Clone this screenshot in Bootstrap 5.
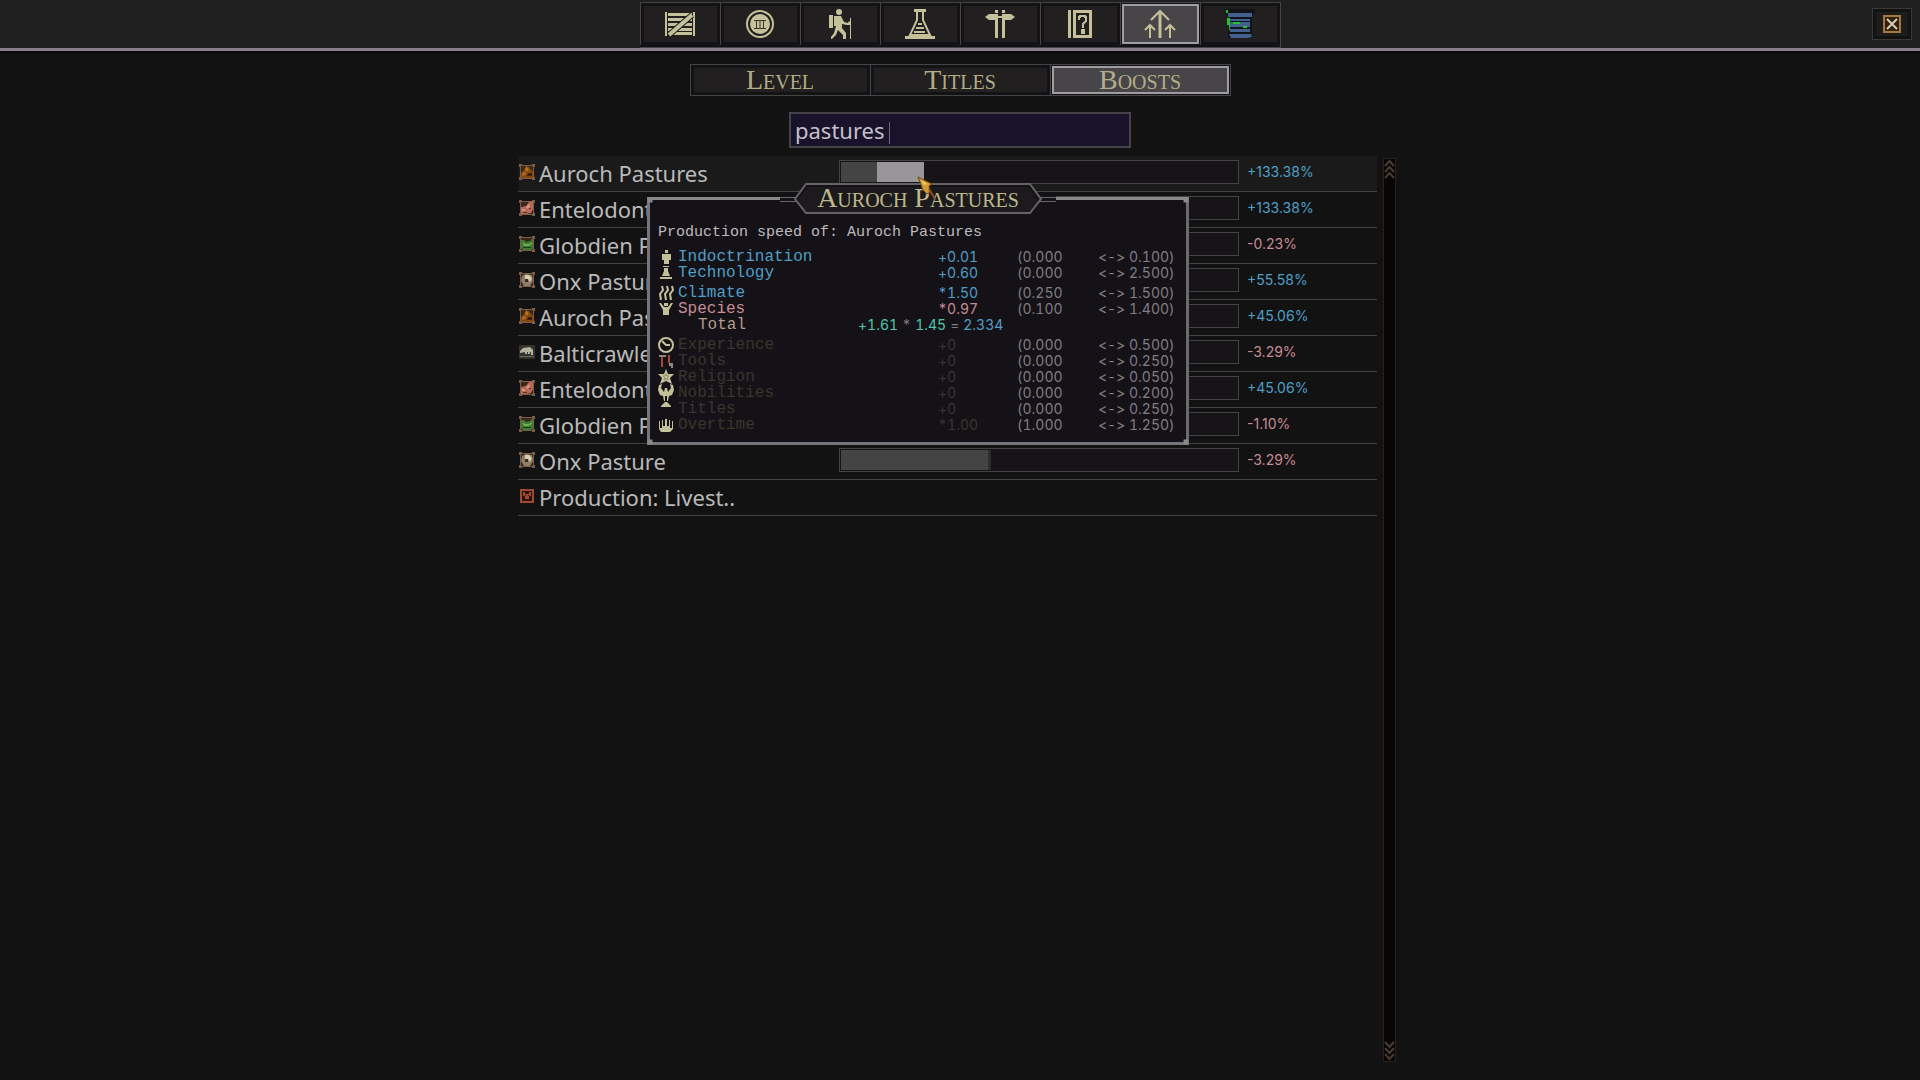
<!DOCTYPE html>
<html lang="en">
<head>
<meta charset="utf-8">
<meta name="viewport" content="width=device-width, initial-scale=1">
<title>Boosts</title>
<link rel="stylesheet" href="https://cdn.jsdelivr.net/npm/bootstrap@5.3.0/dist/css/bootstrap.min.css">
<style>
:root{--cream:#c4c19a;--gold:#b2ae86;--line:#444244;--good:#4f9fc6;--bad:#c68c94;--num:"Inter","Liberation Sans",sans-serif}
body{background:#131213;color:#b9b9b9;font-family:"Noto Sans","Open Sans",sans-serif;overflow:hidden}
svg{display:block;overflow:visible}
button{padding:0}
.topbar{display:grid;grid-template-columns:1fr auto 1fr;height:51px;padding-top:2px;background:#1e1f1e;border-bottom:3px solid #858187;box-shadow:0 2px 0 #09090b}
.frame-set{border:1px solid #444345;border-left:0;background:#121113}
.frame-set>button{border:0;border-left:1px solid #444345;background:#211f20;box-shadow:inset 0 0 0 3px #131214}
.frame-set>button.active{background:#474548;box-shadow:inset 0 0 0 1px #131214,inset 0 0 0 3px #a09da1}
.menu-btn{width:80px;height:42px}
.close-btn{width:40px;height:32px;border:1px solid #39393a;background:#1d1c1c;box-shadow:inset 0 0 0 3px #121213;margin:6px 8px 0 0}
.tabs{margin:13px 0 16px}
.tab-btn{width:180px;height:30px}
.caps{font-family:"Liberation Serif",serif;font-variant:small-caps;color:var(--gold);font-size:28px;line-height:28px}
.search{width:342px;height:36px;border:2px solid #454349;background:#18122a;color:#c4c0cc;font-size:22px;line-height:32px;padding:0 4px;border-radius:0;outline:0}
.caret{left:100px;top:10px;width:1px;height:22px;background:#6d6977}
.board{width:884px;position:relative}
.boost-list{width:859px}
.boost-row{height:36px;border-bottom:1px solid var(--line)}
.boost-row.hot{background:#1b1a1b}
.boost-ico{width:16px;height:16px;margin:0 4px 4px 1px}
.boost-name{width:300px;font-size:22px;line-height:35px;white-space:nowrap}
.meter{width:400px;height:24px;border:1px solid var(--line);background:#161417;padding:1px;margin-bottom:3px}
.meter .base{background:#454445}
.meter .gain{background:#989698}
.meter .loss{background:#2f2d2f}
.pct{font:14px/20px var(--num);margin:0 0 4px 8px}
.good{color:var(--good)}.bad{color:var(--bad)}
.rail{width:13px;margin:2px 0 18px 6px;border:1px solid #2a211b;background:#080505}
.rail button{border:0;background:none}
.tip{left:129px;top:41px;width:542px;height:248px;background:#151217;border:3px solid;border-color:#8b888c #6d6a6f #77747a #77747a;padding:21px 8px;z-index:2}
.knob{width:5px;height:5px;background:#8b888c}
.plaque{left:50%;top:-17px;transform:translateX(-50%);width:276px;height:31px;z-index:3}
.plaque svg{position:absolute;inset:0}
.plaque h2{position:relative;margin:0;text-align:center;line-height:29px;color:#bdb98c}
.tip p,.tip th{font-family:"Liberation Mono",monospace}
.tip p{font-size:15px;line-height:24px;margin:0 0 4px;color:#bdbabd}
.tip table{table-layout:fixed;width:524px;border-collapse:collapse}
.tip th{font-size:16px;font-weight:400;white-space:nowrap}
.tip th,.tip td{line-height:16px;height:16px;padding:0;vertical-align:bottom}
.tip td{font-family:var(--num);font-size:14px;font-feature-settings:"calt" 0,"tnum" 1;color:#807d81;white-space:nowrap}
.tip tbody+tbody tr:first-child>*{padding-top:4px}
.tip td svg{width:16px;height:16px}
.tip .good{color:var(--good)}.tip .bad{color:var(--bad)}
.off th,.tip .off .val{color:#3b342d}
.tip .sum{color:#b39c8c;padding-left:20px}
.tip .total span{margin-right:4px}
.tip .teal{color:#52c4ae}
.pointer{left:399px;top:20px;width:22px;height:28px;z-index:5;pointer-events:none}
</style>
</head>
<body>
<svg width="0" height="0" class="position-absolute" aria-hidden="true">
<defs>
<symbol id="animal-frame" viewBox="0 0 16 16"><path fill="#7a5d4a" d="M0 0h3v1h10V0h3v3h-1v10h1v3h-3v-1H3v1H0v-3h1V3H0z"/><path fill="#3a281d" d="M2 2h12v12H2z"/></symbol>
<symbol id="auroch" viewBox="0 0 16 16"><use href="#animal-frame"/><path fill="#84490f" d="M2 9l3-3 2-4 3 1 2 3 2 2v6H2z"/><path fill="#b8732a" d="M6 4l2-1 2 3-3 2zM3 10l3-2 1 2-3 2z"/><path fill="#3c1f0c" d="M9 9h4v3H8z"/></symbol>
<symbol id="entelodont" viewBox="0 0 16 16"><use href="#animal-frame"/><path fill="#b86a56" d="M2 7l5-1 3-4 4-1v8l-2 4-5 1H2z"/><path fill="#d8967e" d="M7 7l3-3 1 3-3 2zM3 9h3v2H3z"/><path fill="#5d2a23" d="M10 8h2v1h-2zM4 12h4v1H4z"/></symbol>
<symbol id="globdien" viewBox="0 0 16 16"><use href="#animal-frame"/><path fill="#3f7a35" d="M2 4h3l2 2 4-1 3-3v11l-3 1H4l-2-2z"/><path fill="#6fb052" d="M3 6l3 2h4l3-2v2l-4 2H5z"/><path fill="#1f3c1c" d="M4 11h8v1H4z"/></symbol>
<symbol id="onx" viewBox="0 0 16 16"><use href="#animal-frame"/><path fill="#8f7d66" d="M3 4l4-2 6 1 1 6-3 5H5L2 9z"/><path fill="#d7ccb4" d="M6 3h4l3 3-2 4-2-3H6z"/><path fill="#372a20" d="M6 7h3v3H6z"/></symbol>
<symbol id="crawler" viewBox="0 0 16 16"><path fill="#34322c" d="M0 1h16v14H0z"/><path fill="#b4b39d" d="M1 7l3-3 7-1 3 3v5h-2V8h-1v2H9V8H8v2H6V8L1 9z"/><path fill="#6b6a5b" d="M1 12h14v1H1z"/></symbol>
<symbol id="livestock" viewBox="0 0 16 16"><path fill="#a04a2d" d="M1 1h14v14H1z"/><path fill="#2c120d" d="M3 3h10v10H3z"/><path fill="#a04a2d" d="M4 4h2v2h4V4h2v4h-2v3H6V8H4z"/><path fill="#2c120d" d="M6 7h1v1H6zM9 7h1v1H9z"/></symbol>
</defs>
</svg>

<div class="vh-100 d-flex flex-column">
<header class="topbar">
  <span></span>
  <nav class="frame-set d-flex" aria-label="Panels">
    <button class="menu-btn d-flex align-items-center justify-content-center" aria-label="Room"><svg width="30" height="24" viewBox="0 0 30 24"><path fill="#c4c19a" d="M0 0h2v24H0zM28 0h2v24h-2zM3 1h24v3H3zM3 6h19v3H3zM3 11h24v3H3zM3 16h24v3H3zM6 20h21v3H6zM24 6h3v3h-3z"/><path stroke="#211f20" stroke-width="6" d="M4 23L27 3"/><path stroke="#c4c19a" stroke-width="4" d="M4 23L27 3"/></svg></button>
    <button class="menu-btn d-flex align-items-center justify-content-center" aria-label="Treasury"><svg width="28" height="28" viewBox="0 0 28 28"><circle cx="14" cy="14" r="13" fill="none" stroke="#c4c19a" stroke-width="2"/><circle cx="14" cy="14" r="10" fill="#c4c19a"/><path stroke="#37352b" d="M8 10.500h12M8 18.500h12M10.500 11v7M14 11v7M17.500 11v7"/></svg></button>
    <button class="menu-btn d-flex align-items-center justify-content-center" aria-label="Travel"><svg width="24" height="30" viewBox="0 0 24 30"><circle cx="11" cy="3" r="3" fill="#c4c19a"/><path fill="#c4c19a" d="M1 6h4v13H1zM6 7h7l3 6 4 1 1-2 1 1v3h-3l-5-1v4l4 5v6h-3v-4l-5-5-2 5-4 4H3v-2l3-4 2-7H6z"/><path stroke="#c4c19a" d="M22.500 9v21"/></svg></button>
    <button class="menu-btn d-flex align-items-center justify-content-center" aria-label="Technology"><svg width="30" height="30" viewBox="0 0 30 30"><path fill="#c4c19a" d="M9 0h12v3H9zM0 27h30v3H0z"/><path fill="none" stroke="#c4c19a" stroke-width="2" d="M12 3v8L5 26h20l-7-15V3"/><path fill="#c4c19a" d="M13 14h4v2h-4zM11 18h8v2h-8zM9 22h11v2H9zM7 25h16v1H7z"/></svg></button>
    <button class="menu-btn d-flex align-items-center justify-content-center" aria-label="Level"><svg width="30" height="28" viewBox="0 0 30 28"><path fill="#c4c19a" d="M10 0h3v3h-3zM17 0h3v3h-3zM0 7l4-3h9v6H4zM30 7l-4-3h-9v6h9zM10 10h3v18h-3zM17 10h3v18h-3zM13 6h4v2h-4z"/></svg></button>
    <button class="menu-btn d-flex align-items-center justify-content-center" aria-label="Help"><svg width="24" height="28" viewBox="0 0 24 28"><path fill="#c4c19a" d="M0 0h3v28H0z"/><path fill="none" stroke="#c4c19a" stroke-width="3" d="M6.500 1.500h16v25h-16z"/><path fill="none" stroke="#c4c19a" stroke-width="2" d="M11 10V7h1V6h5v1h1v4l-3 3v4M14 20h2v3h-2z"/></svg></button>
    <button class="menu-btn active d-flex align-items-center justify-content-center" aria-label="Boosts"><svg width="32" height="28" viewBox="0 0 32 28" fill="none" stroke="#c4c19a"><path stroke-width="3" d="M16 2v26"/><path stroke-width="2" d="M7 10l9-9 9 9M1 20l5-5 5 5M21 20l5-5 5 5"/><path stroke-width="2" d="M6 16v12M26 16v12"/></svg></button>
    <button class="menu-btn d-flex align-items-center justify-content-center" aria-label="Scroll"><svg width="30" height="30" viewBox="0 0 30 30"><path fill="#10131a" d="M0 0h30v4l-3 3v22H3V8L0 4z"/><path fill="#42618e" d="M3 4h24v4H3zM5 10h20v2H5zM5 13h20v5H5zM5 20h20v3H5zM4 25h22l1 3-5 1H6z"/><path fill="#26c22c" d="M1 1h2v3H1zM2 9h3v12H4v-5H2zM8 13h7v2H8zM18 17h4v2h-4z"/></svg></button>
  </nav>
  <button class="close-btn d-flex align-items-center justify-content-center ms-auto" aria-label="Close"><svg width="18" height="18" viewBox="0 0 18 18"><path fill="#302210" stroke="#a5783c" stroke-width="2" d="M1 1h16v16H1z"/><path stroke="#d8cdb4" stroke-width="2" d="M4 4l10 10M14 4L4 14"/></svg></button>
</header>

<main class="d-flex flex-column align-items-center flex-grow-1">
  <div class="frame-set d-flex tabs" role="tablist">
    <button class="tab-btn caps" role="tab">Level</button>
    <button class="tab-btn caps" role="tab">Titles</button>
    <button class="tab-btn caps active" role="tab" aria-selected="true">Boosts</button>
  </div>
  <div class="position-relative d-flex mb-2">
    <input class="search" type="text" value="pastures" aria-label="Search boosts">
    <i class="caret position-absolute"></i>
  </div>

  <div class="board d-flex flex-grow-1">
    <div class="boost-list">
      <div class="boost-row hot d-flex align-items-center"><svg class="boost-ico"><use href="#auroch"/></svg><span class="boost-name">Auroch Pastures</span><div class="meter d-flex"><div class="base" style="width:9%"></div><div class="gain" style="width:12%"></div></div><span class="pct good">+133.38%</span></div>
      <div class="boost-row d-flex align-items-center"><svg class="boost-ico"><use href="#entelodont"/></svg><span class="boost-name">Entelodont Pastures</span><div class="meter d-flex"></div><span class="pct good">+133.38%</span></div>
      <div class="boost-row d-flex align-items-center"><svg class="boost-ico"><use href="#globdien"/></svg><span class="boost-name">Globdien Pastures</span><div class="meter d-flex"></div><span class="pct bad">-0.23%</span></div>
      <div class="boost-row d-flex align-items-center"><svg class="boost-ico"><use href="#onx"/></svg><span class="boost-name">Onx Pastures</span><div class="meter d-flex"></div><span class="pct good">+55.58%</span></div>
      <div class="boost-row d-flex align-items-center"><svg class="boost-ico"><use href="#auroch"/></svg><span class="boost-name">Auroch Pasture</span><div class="meter d-flex"></div><span class="pct good">+45.06%</span></div>
      <div class="boost-row d-flex align-items-center"><svg class="boost-ico"><use href="#crawler"/></svg><span class="boost-name">Balticrawler Pasture</span><div class="meter d-flex"></div><span class="pct bad">-3.29%</span></div>
      <div class="boost-row d-flex align-items-center"><svg class="boost-ico"><use href="#entelodont"/></svg><span class="boost-name">Entelodont Pasture</span><div class="meter d-flex"></div><span class="pct good">+45.06%</span></div>
      <div class="boost-row d-flex align-items-center"><svg class="boost-ico"><use href="#globdien"/></svg><span class="boost-name">Globdien Pasture</span><div class="meter d-flex"></div><span class="pct bad">-1.10%</span></div>
      <div class="boost-row d-flex align-items-center"><svg class="boost-ico"><use href="#onx"/></svg><span class="boost-name">Onx Pasture</span><div class="meter d-flex"><div class="base" style="width:37%"></div><div class="loss" style="width:1%"></div></div><span class="pct bad">-3.29%</span></div>
      <div class="boost-row d-flex align-items-center"><svg class="boost-ico"><use href="#livestock"/></svg><span class="boost-name">Production: Livest..</span></div>
    </div>
    <div class="rail d-flex flex-column justify-content-between">
      <button aria-label="Scroll up"><svg width="11" height="22" viewBox="0 0 11 22" fill="none" stroke="#4a3c31" stroke-width="2"><path d="M1 7l4.500-5L10 7M1 13l4.500-5 4.500 5M1 19l4.500-5 4.500 5"/></svg></button>
      <button aria-label="Scroll down"><svg width="11" height="22" viewBox="0 0 11 22" fill="none" stroke="#4a3c31" stroke-width="2"><path d="M1 3l4.500 5L10 3M1 9l4.500 5L10 9M1 15l4.500 5 4.500-5"/></svg></button>
    </div>

    <section class="tip position-absolute" role="tooltip">
      <div class="plaque position-absolute">
        <svg width="276" height="31" viewBox="0 0 276 31"><path fill="#151217" d="M0 13h276v6H0z"/><path stroke="#69666a" stroke-width="1" d="M0 14.500h16M0 18.500h16M260 14.500h16M260 18.500h16"/><path fill="#1c1a1d" stroke="#656266" stroke-width="2" d="M15 16L26 1h224l11 15-11 14H26z"/><path fill="none" stroke="#0c0b0d" d="M18 16l9-13h222l9 13"/></svg>
        <h2 class="caps">Auroch Pastures</h2>
      </div>
      <p>Production speed of: Auroch Pastures</p>
      <table>
        <colgroup><col style="width:20px"><col style="width:180px"><col style="width:80px"><col style="width:79px"><col style="width:81px"><col style="width:84px"></colgroup>
        <tbody>
          <tr><td><svg viewBox="0 0 16 16"><path fill="#c4c19a" d="M7 1h3v3H7zM4 5h9v6h-2v4H6v-4H4z"/></svg></td><th scope="row" colspan="2" class="good">Indoctrination</th><td class="good">+0.01</td><td>(0.000</td><td>&lt;-&gt; 0.100)</td></tr>
          <tr><td><svg viewBox="0 0 16 16"><path fill="#c4c19a" d="M5 1h6v1H5zM6 3h4v3l2 5H4l2-5zM2 12h12v2H2z"/></svg></td><th scope="row" colspan="2" class="good">Technology</th><td class="good">+0.60</td><td>(0.000</td><td>&lt;-&gt; 2.500)</td></tr>
        </tbody>
        <tbody>
          <tr><td><svg viewBox="0 0 16 16" fill="none" stroke="#c4c19a" stroke-width="2"><path d="M4 1l1 4-3 4 1 6M9 1l1 4-3 4 1 6M14 1l1 4-3 4 1 6"/></svg></td><th scope="row" colspan="2" class="good">Climate</th><td class="good">*1.50</td><td>(0.250</td><td>&lt;-&gt; 1.500)</td></tr>
          <tr><td><svg viewBox="0 0 16 16"><path fill="#c4c19a" d="M6 2h4v3H6zM1 2h2l3 4h4l3-4h2l-4 7v5H5V9z"/></svg></td><th scope="row" colspan="2" class="bad">Species</th><td class="bad">*0.97</td><td>(0.100</td><td>&lt;-&gt; 1.400)</td></tr>
          <tr class="total"><td></td><th scope="row" class="sum">Total</th><td colspan="4"><span class="teal">+1.61</span><span>*</span><span class="teal">1.45</span><span>=</span><span class="good">2.334</span></td></tr>
        </tbody>
        <tbody class="off">
          <tr><td><svg viewBox="0 0 16 16" fill="none" stroke="#c4c19a"><circle cx="8" cy="8" r="7" stroke-width="2"/><path stroke-width="2" d="M4 4l4 4h4"/></svg></td><th scope="row" colspan="2">Experience</th><td class="val">+0</td><td>(0.000</td><td>&lt;-&gt; 0.500)</td></tr>
          <tr><td><svg viewBox="0 0 16 16"><path fill="#8c8a7c" d="M1 2h7v2H1zM11 10h4v5h-2v-2h-2z"/><path fill="#a3492f" d="M3 4h2v10H3zM10 2h2v8h-2z"/></svg></td><th scope="row" colspan="2">Tools</th><td class="val">+0</td><td>(0.000</td><td>&lt;-&gt; 0.250)</td></tr>
          <tr><td><svg viewBox="0 0 16 16"><path fill="#c4c19a" d="M8 0l2 5h6l-4 4 2 6-6-3-6 3 2-6-4-4h6z"/><path fill="none" stroke="#8d8a6e" d="M8 5l1 2h2l-2 2 1 2-2-1-2 1 1-2-2-2h2z"/></svg></td><th scope="row" colspan="2">Religion</th><td class="val">+0</td><td>(0.000</td><td>&lt;-&gt; 0.050)</td></tr>
          <tr><td><svg viewBox="0 0 16 16"><path fill="#c4c19a" d="M1 0l3-1-1 4 3 4 1-4h2l1 4 3-4-1-4 3 1 1 5-2 5-3 1-1 5H9v-5H7v5H6l-1-5-3-1L0 5z"/></svg></td><th scope="row" colspan="2">Nobilities</th><td class="val">+0</td><td>(0.000</td><td>&lt;-&gt; 0.200)</td></tr>
          <tr><td><svg viewBox="0 0 16 16"><path fill="#c4c19a" d="M7 1h2l4 4v1H3V5z"/></svg></td><th scope="row" colspan="2">Titles</th><td class="val">+0</td><td>(0.000</td><td>&lt;-&gt; 0.250)</td></tr>
          <tr><td><svg viewBox="0 0 16 16"><path fill="#c4c19a" d="M1 4h1v7h2V3h1v6h2V2h2v7h2V3h1v8h2V4h1v8l-3 3H3l-2-3z"/></svg></td><th scope="row" colspan="2">Overtime</th><td class="val">*1.00</td><td>(1.000</td><td>&lt;-&gt; 1.250)</td></tr>
        </tbody>
      </table>
      <i class="knob position-absolute top-0 start-0 translate-middle"></i><i class="knob position-absolute top-0 start-100 translate-middle"></i><i class="knob position-absolute top-100 start-0 translate-middle"></i><i class="knob position-absolute top-100 start-100 translate-middle"></i>
    </section>
    <svg class="pointer position-absolute" viewBox="0 0 22 28" aria-hidden="true"><path fill="#d19a35" stroke="#6d4513" d="M1 1l14 7-3 2 1 6-3 2-4-4z"/><path fill="#f0cf6a" d="M4 4l6 4-3 1z"/><path stroke="#8a4a26" stroke-width="2" d="M12 13l6 10"/></svg>
  </div>
</main>
</div>
<script src="https://cdn.jsdelivr.net/npm/bootstrap@5.3.0/dist/js/bootstrap.bundle.min.js"></script>
</body>
</html>
